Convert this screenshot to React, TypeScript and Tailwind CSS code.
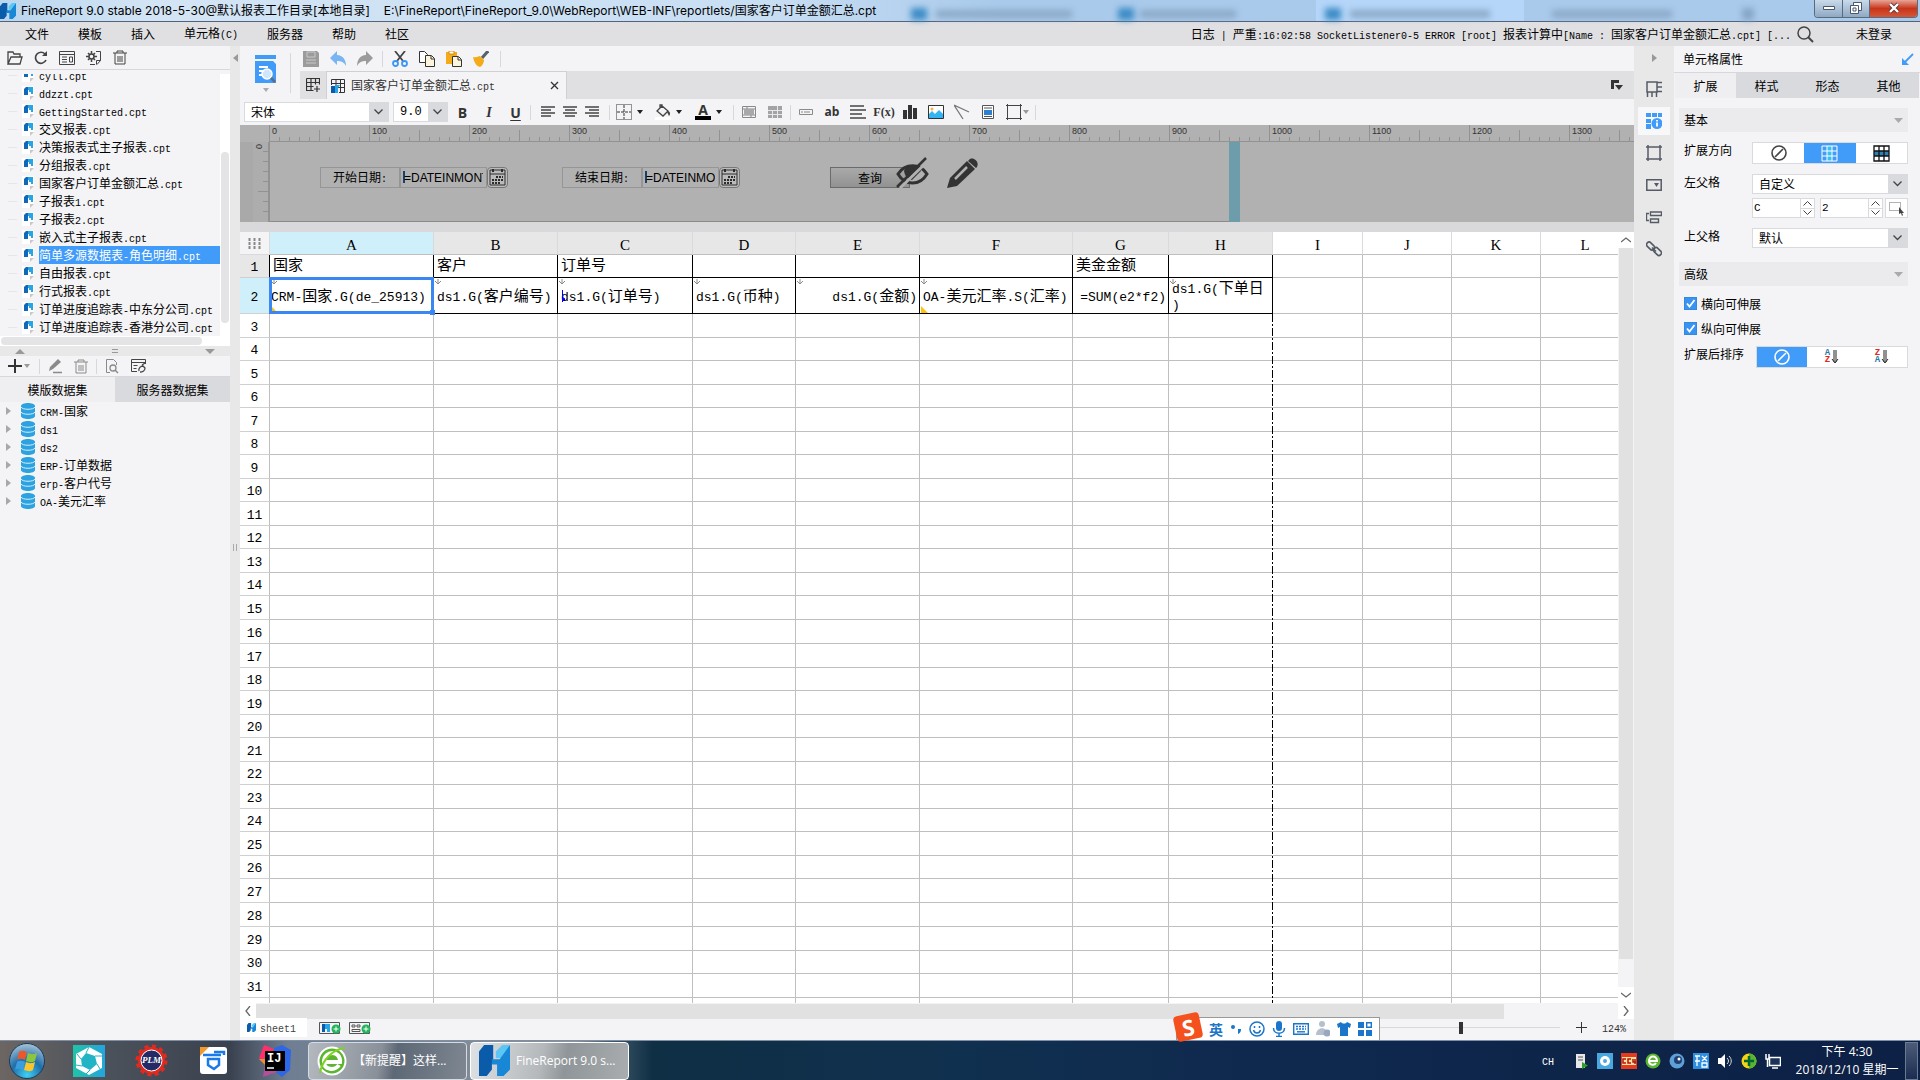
import { useState } from "react";
import type { ReactNode } from "react";
import clsx from "clsx";

const FILES = [
  "cyll.cpt",
  "ddzzt.cpt",
  "GettingStarted.cpt",
  "交叉报表.cpt",
  "决策报表式主子报表.cpt",
  "分组报表.cpt",
  "国家客户订单金额汇总.cpt",
  "子报表1.cpt",
  "子报表2.cpt",
  "嵌入式主子报表.cpt",
  "简单多源数据表-角色明细.cpt",
  "自由报表.cpt",
  "行式报表.cpt",
  "订单进度追踪表-中东分公司.cpt",
  "订单进度追踪表-香港分公司.cpt",
];

const DATASETS = ["CRM-国家", "ds1", "ds2", "ERP-订单数据", "erp-客户代号", "OA-美元汇率"];

const COLUMNS = [
  { name: "A", w: "w-[164px]" },
  { name: "B", w: "w-[124px]" },
  { name: "C", w: "w-[135px]" },
  { name: "D", w: "w-[103px]" },
  { name: "E", w: "w-[124px]" },
  { name: "F", w: "w-[153px]" },
  { name: "G", w: "w-[96px]" },
  { name: "H", w: "w-[104px]" },
  { name: "I", w: "w-[90px]" },
  { name: "J", w: "w-[89px]" },
  { name: "K", w: "w-[89px]" },
  { name: "L", w: "w-[89px]" },
];

const HEAD_CELLS = ["国家", "客户", "订单号", "", "", "", "美金金额", ""];
const DATA_CELLS = [
  "CRM-国家.G(de_25913)",
  "ds1.G(客户编号)",
  "ds1.G(订单号)",
  "ds1.G(币种)",
  "ds1.G(金额)",
  "OA-美元汇率.S(汇率)",
  "=SUM(e2*f2)",
  "ds1.G(下单日\n)",
];
const ROWS = Array.from({ length: 30 }, (_, i) => i + 3);

// 西文用等宽字体，宽度约为汉字的一半
function Txt({ children, big }: { children: string; big?: boolean }) {
  return (
    <span className={clsx("whitespace-pre", big ? "text-[15px]" : "text-[12px]")}>
      {children.split(/([\x20-\x7e]+)/).map((part, i) =>
        i % 2 ? (
          <span key={i} className={clsx("font-['Liberation_Mono',monospace]", big ? "text-[13px]" : "text-[10px]")}>{part}</span>
        ) : (
          part
        )
      )}
    </span>
  );
}

function Svg({ w = 16, h = 16, children, className }: { w?: number; h?: number; children: ReactNode; className?: string }) {
  return (
    <svg width={w} height={h} viewBox={`0 0 ${w} ${h}`} fill="none" className={clsx("shrink-0", className)} aria-hidden="true">
      {children}
    </svg>
  );
}

const Logo = ({ s = 14 }: { s?: number }) => (
  <svg width={s} height={s} viewBox="0 0 24 24" className="shrink-0" aria-hidden="true">
    <path d="M0 5 4 0h7v12l-1 2v5l-4 5H0z" fill="#0a5cab" />
    <path d="M13 5l5-5h6l-3 10h-8z" fill="#5cc6f5" />
    <path d="M10 11h6l8-11v19l-5 5h-5v-9h-4z" fill="#1787d6" />
  </svg>
);

const FileIcon = () => (
  <Svg w={13} h={15}>
    <path d="M0 0h12v10l-4 4H0z" fill="#fff" />
    <path d="M8 14v-4h4z" fill="#c8c8cc" />
    <path d="M2 3 4 1h2v8H2z" fill="#0f68b8" />
    <path d="M6 1h5v7H9V6H7V4H6z" fill="#27a5e4" />
  </Svg>
);

const DbIcon = () => (
  <Svg w={14} h={16}>
    <path d="M0 3c0-4 14-4 14 0v10c0 4-14 4-14 0z" fill="#2ca3e0" />
    <path d="M0 4c1 3 13 3 14 0M0 9c1 3 13 3 14 0" stroke="#d8effa" />
  </Svg>
);

const Caret = ({ color = "#222" }: { color?: string }) => (
  <Svg w={8} h={5}><path d="M1 0h6L4 4z" fill={color} /></Svg>
);

const Sep = ({ tall }: { tall?: boolean }) => <i className={clsx("w-px shrink-0 bg-[#d8d8dc]", tall ? "h-4" : "h-[15px]")} />;

const TrashIcon = ({ color = "#444" }: { color?: string }) => (
  <Svg w={14} h={15}>
    <path d="M0 3h14M4 3V1h6v2M2 3v11h10V3M5 6v6M7 6v6M9 6v6" stroke={color} />
  </Svg>
);

const NoneIcon = ({ color = "#444" }: { color?: string }) => (
  <Svg w={16} h={16}>
    <circle cx="8" cy="8" r="7" stroke={color} strokeWidth="1.6" />
    <path d="M4 12l8-8" stroke={color} strokeWidth="1.6" />
  </Svg>
);

const CalIcon = () => (
  <Svg w={17} h={17}>
    <path d="M1 1h15v15H1zM1 5h15" stroke="#2c2c2c" />
    <path d="M4 0v3M13 0v3" stroke="#2c2c2c" strokeWidth="2" />
    <path d="M7 8h7M3 11h11M3 14h8" stroke="#2c2c2c" strokeWidth="2" strokeDasharray="2 1" />
  </Svg>
);

function IconButton({ label, className, children }: { label: string; className?: string; children: ReactNode }) {
  return (
    <button type="button" aria-label={label} className={clsx("flex shrink-0 items-center justify-center", className)}>
      {children}
    </button>
  );
}

function TitleBar() {
  return (
    <header className="relative flex h-[22px] shrink-0 items-center border-b border-[#55637a] bg-[linear-gradient(90deg,#b9d6ee_0,#d3e5f5_8%,#c8def3_40%,#b9d4ef_46%,#a9caeb_52%,#a9caeb)] font-['Inter','Noto_Sans_CJK_SC',sans-serif] text-[12px]">
      <div className="absolute inset-y-0 left-[1316px] w-[208px] bg-[#b5d6f9]" />
      <div className="absolute inset-0 overflow-hidden blur-[3px]">
        <i className="absolute left-[911px] top-2 h-3 w-4 bg-[#3c8cc6]" />
        <i className="absolute left-[936px] top-2.5 h-2 w-[136px] bg-[#8ba9c8]" />
        <i className="absolute left-[1118px] top-2 h-3 w-4 bg-[#3c8cc6]" />
        <i className="absolute left-[1140px] top-2.5 h-2 w-[96px] bg-[#8ba9c8]" />
        <i className="absolute left-[1325px] top-2 h-3 w-4 bg-[#3c8cc6]" />
        <i className="absolute left-[1350px] top-2.5 h-2 w-[140px] bg-[#8ba9c8]" />
        <i className="absolute left-[1552px] top-2.5 h-2 w-[120px] bg-[#8ba9c8]" />
        <i className="absolute left-[1742px] top-2 h-3 w-3 bg-[#86a5c6]" />
      </div>
      <div className="relative flex w-full items-center whitespace-pre">
        <Logo s={16} />
        <span className="pl-[5px]">FineReport 9.0 stable 2018-5-30@默认报表工作目录[本地目录]</span>
        <span className="pl-[14px]">E:\FineReport\FineReport_9.0\WebReport\WEB-INF\reportlets/国家客户订单金额汇总.cpt</span>
        <div className="mb-1 ml-auto mr-[2px] flex h-[18px] overflow-hidden rounded-b border border-t-0 border-[#5a6b80]">
          <IconButton label="最小化" className="w-7 border-r border-[#5a6b80] bg-[linear-gradient(#c9daea,#8fa9c3)]">
            <Svg w={14} h={8}><path d="M1.500 2.500h11v3h-11z" fill="#fff" stroke="#49566b" /></Svg>
          </IconButton>
          <IconButton label="还原" className="w-[27px] border-r border-[#5a6b80] bg-[linear-gradient(#c9daea,#8fa9c3)]">
            <Svg w={14} h={14}>
              <path d="M4.500 1.500h8v8h-8z" fill="#fff" stroke="#49566b" />
              <path d="M1.500 4.500h8v8h-8zM4 7h3v3H4z" fill="#fff" stroke="#49566b" />
            </Svg>
          </IconButton>
          <IconButton label="关闭" className="w-[47px] bg-[linear-gradient(#e8a596,#c8351b_50%,#d4573a)]">
            <Svg w={14} h={12}>
              <path d="M3 2l8 8M11 2l-8 8" stroke="#5d3838" strokeWidth="4" />
              <path d="M3 2l8 8M11 2l-8 8" stroke="#fff" strokeWidth="2.400" />
            </Svg>
          </IconButton>
        </div>
      </div>
    </header>
  );
}

function MenuBar() {
  return (
    <nav className="flex h-6 shrink-0 items-center bg-[#e0e0e3] pl-[25px]">
      <div className="flex gap-[29px]">
        {["文件", "模板", "插入", "单元格(C)", "服务器", "帮助", "社区"].map((m) => (
          <button key={m} type="button" className="leading-4"><Txt>{m}</Txt></button>
        ))}
      </div>
      <div className="ml-auto flex items-center pr-[28px]">
        <Txt>{"日志 | 严重:16:02:58 SocketListener0-5 ERROR [root] 报表计算中[Name : 国家客户订单金额汇总.cpt] [..."}</Txt>
        <IconButton label="搜索" className="ml-[6px] mr-[42px]">
          <Svg w={17} h={17}>
            <circle cx="7" cy="7" r="6" stroke="#444" strokeWidth="1.500" />
            <path d="M11 11l5 5" stroke="#444" strokeWidth="2" />
          </Svg>
        </IconButton>
        <button type="button"><Txt>未登录</Txt></button>
      </div>
    </nav>
  );
}

function LeftPanel() {
  const [selected, setSelected] = useState("简单多源数据表-角色明细.cpt");
  const [tab, setTab] = useState(0);
  return (
    <aside className="flex w-[230px] shrink-0 flex-col bg-[#f4f4f6]">
      <div className="flex h-[24px] shrink-0 items-center gap-[11px] border-b border-[#d8d8dc] pl-[7px]">
        <IconButton label="打开">
          <Svg w={16} h={14}>
            <path d="M1 13V1h5l1 2h6v3M1 13l3-7h11l-2 7z" stroke="#444" strokeWidth="1.300" />
          </Svg>
        </IconButton>
        <IconButton label="刷新">
          <Svg w={14} h={14}>
            <path d="M12 9a5.500 5.500 0 1 1-1-6" stroke="#444" strokeWidth="1.700" />
            <path d="M13 0v5H8z" fill="#444" />
          </Svg>
        </IconButton>
        <IconButton label="定位">
          <Svg w={16} h={14}>
            <path d="M.5.5h15v13H.5zM.5 3.500h15M3 6h5M3 8.500h5M3 11h5M10.500 6h3v5h-3z" stroke="#444" />
          </Svg>
        </IconButton>
        <IconButton label="设置">
          <Svg w={16} h={14}>
            <circle cx="5.500" cy="5.500" r="2.500" stroke="#444" strokeWidth="1.500" />
            <path d="M5.500 0v3M5.500 8v3M0 5.500h3M8 5.500h3M2 2l2 2M9 2 7 4M2 9l2-2M9 9 7 7" stroke="#444" strokeWidth="1.500" />
            <path d="M10 .5h4.500v9M4 13.500h5M11 13.500l3.500-4h-4v4" stroke="#444" />
          </Svg>
        </IconButton>
        <IconButton label="删除"><TrashIcon /></IconButton>
      </div>
      <div className="mt-1 flex h-[262px] shrink-0">
        <ul className="-mt-2 flex h-[270px] w-[220px] flex-col overflow-hidden [clip-path:inset(8px_0_0_0)]">
          {FILES.map((f) => (
            <li key={f} className="flex h-[18px] shrink-0 items-center pl-2">
              <i className="h-px w-[9px] bg-[#e6e6ea]" />
              <span className="ml-[5px]"><FileIcon /></span>
              <button
                type="button"
                onClick={() => setSelected(f)}
                className={clsx("ml-1 flex h-[18px] items-center text-left", f === selected && "w-[181px] bg-[#419bf9] text-white")}
              >
                <Txt>{f}</Txt>
              </button>
            </li>
          ))}
        </ul>
        <div className="w-[10px] bg-white pt-[78px]">
          <div className="ml-px h-[171px] w-2 rounded bg-[#e4e4e6]" />
        </div>
      </div>
      <div className="h-[10px] shrink-0 bg-white pl-px pt-px"><div className="h-2 w-[201px] rounded bg-[#e4e4e6]" /></div>
      <div className="flex h-[10px] shrink-0 items-center justify-between bg-[#e8e8e8] px-[15px]">
        <Svg w={10} h={5}><path d="M0 5h10L5 0z" fill="#999" /></Svg>
        <Svg w={6} h={5}><path d="M0 .5h6M0 3.500h6" stroke="#999" /></Svg>
        <Svg w={10} h={5}><path d="M0 0h10L5 5z" fill="#999" /></Svg>
      </div>
      <div className="flex h-[21px] shrink-0 items-center border-b border-[#d8d8dc] pl-2">
        <IconButton label="新建数据集" className="w-[31px] justify-start gap-px">
          <Svg w={14} h={14}><path d="M0 7h14M7 0v14" stroke="#333" strokeWidth="2" /></Svg>
          <Caret color="#999" />
        </IconButton>
        <Sep />
        <IconButton label="编辑" className="ml-2">
          <Svg w={15} h={15}>
            <path d="M1 12l1-4 8-8 3 3-8 7z" fill="#8a8a8a" />
            <path d="M5 13.500h9" stroke="#8a8a8a" strokeWidth="1.500" />
          </Svg>
        </IconButton>
        <IconButton label="删除数据集" className="ml-[11px]"><TrashIcon color="#8a8a8a" /></IconButton>
        <i className="ml-2 h-[15px] w-px bg-[#d8d8dc]" />
        <IconButton label="预览数据集" className="ml-2">
          <Svg w={14} h={15}>
            <path d="M5 13.500H1.500V.5h7l3 3V6" stroke="#8a8a8a" />
            <circle cx="8" cy="9" r="3" stroke="#8a8a8a" strokeWidth="1.300" />
            <path d="M10 11l3 3" stroke="#8a8a8a" strokeWidth="1.500" />
          </Svg>
        </IconButton>
        <IconButton label="连接" className="ml-3">
          <Svg w={15} h={14}>
            <path d="M6 12.500H.5V.5h14V5M.5 3.500h14M2.500 6.500h4M2.500 9.500h3" stroke="#444" />
            <path d="M8 12c-1-3 2-5 4-5l2 2c0 3-3 4-5 4M11 6l3-2" stroke="#444" strokeWidth="1.300" />
          </Svg>
        </IconButton>
      </div>
      <div className="flex h-[25px] shrink-0">
        {["模版数据集", "服务器数据集"].map((t, i) => (
          <button key={t} type="button" onClick={() => setTab(i)} className={clsx("flex-1", i === tab ? "bg-[#efeff1]" : "bg-[#d9dadd]")}>
            <Txt>{t}</Txt>
          </button>
        ))}
      </div>
      <ul className="flex-1">
        {DATASETS.map((d) => (
          <li key={d} className="flex h-[18px] items-center pl-[6px]">
            <Svg w={5} h={8}><path d="M0 0v8l5-4z" fill="#a8a8a8" /></Svg>
            <span className="ml-[10px]"><DbIcon /></span>
            <span className="ml-[5px] flex"><Txt>{d}</Txt></span>
          </li>
        ))}
      </ul>
    </aside>
  );
}

function TopTools() {
  return (
    <div className="flex h-[53px] shrink-0 bg-[#f4f4f6]">
      <div className="flex w-[60px] pl-[15px] pt-[7px]">
        <IconButton label="预览" className="h-[42px] flex-col gap-[5px]">
          <Svg w={21} h={28}>
            <path d="M0 0h21v4H0zM0 6h18l3 3v19H0z" fill="#419bf9" />
            <path d="M4 12h9M4 16h4M4 20h4" stroke="#fff" strokeWidth="2" />
            <circle cx="12" cy="19" r="5" fill="#cfe6fd" stroke="#fff" strokeWidth="1.500" />
            <path d="M16 23l4 4" stroke="#5b6d80" strokeWidth="2.500" />
          </Svg>
          <Caret color="#aaa" />
        </IconButton>
        <i className="ml-[14px] h-[40px] w-px bg-[#d8d8dc]" />
      </div>
      <div className="flex min-w-0 flex-1 flex-col">
        <div className="flex h-[25px] shrink-0 items-center gap-[11px] pl-[3px]">
          <IconButton label="保存">
            <Svg><path d="M0 0h14l2 2v14H0z" fill="#9b9b9b" /><path d="M4 1h8v5H4zM3 9h10M3 12h10" stroke="#c9c9cb" /></Svg>
          </IconButton>
          <IconButton label="撤销">
            <Svg><path d="M7 0v4c6 0 9 5 9 11-2-4-5-5-9-5v4L0 7z" fill="#79b5f2" /></Svg>
          </IconButton>
          <IconButton label="重做">
            <Svg><path d="M9 0v4C3 4 0 9 0 15c2-4 5-5 9-5v4l7-7z" fill="#9b9b9b" /></Svg>
          </IconButton>
          <span className="-mx-[2px] flex"><Sep tall /></span>
          <IconButton label="剪切">
            <Svg>
              <path d="M3 0l8 10M13 0L5 10" stroke="#444" strokeWidth="1.800" />
              <circle cx="3.500" cy="12.500" r="2.500" stroke="#3b96f5" strokeWidth="1.800" />
              <circle cx="12.500" cy="12.500" r="2.500" stroke="#3b96f5" strokeWidth="1.800" />
            </Svg>
          </IconButton>
          <IconButton label="复制">
            <Svg>
              <path d="M.5.5h5l3 3v8h-8z" fill="#fff" stroke="#333" />
              <path d="M6.500 4.500h6l3 3v8h-9z" fill="#fdf4dc" stroke="#333" />
              <path d="M12 5v3h3" stroke="#333" />
            </Svg>
          </IconButton>
          <IconButton label="粘贴">
            <Svg>
              <path d="M0 1h11v12H0z" fill="#f3ab1a" />
              <path d="M3 0h5v3H3z" fill="#fff" stroke="#d48e10" />
              <path d="M6.500 5.500h6l3 3v7h-9z" fill="#fdf4dc" stroke="#333" />
              <path d="M12 6v3h3" stroke="#333" />
            </Svg>
          </IconButton>
          <IconButton label="格式刷">
            <Svg>
              <path d="M15 0l-6 7" stroke="#56606e" strokeWidth="3" />
              <path d="M0 6c4 1 5-1 7-1l4 4c0 3-2 6-4 7-4-1-6-5-7-10z" fill="#f3ab1a" />
            </Svg>
          </IconButton>
          <Sep tall />
        </div>
        <div className="flex h-[28px] items-stretch bg-[#e0e0e3]">
          <IconButton label="新建模板" className="w-[26px]">
            <Svg w={14} h={14}>
              <path d="M.5.5h13v6M.5.5v12h7M.5 4.500h13M.5 8.500h7M5 .5v12M9.500.5v6M11 8v6M8 11h6" stroke="#333" strokeWidth="1.200" />
            </Svg>
          </IconButton>
          <div className="flex w-[241px] items-center border-x border-t border-[#d0d0d4] bg-[#f4f4f6] pl-1">
            <Svg w={14} h={14}>
              <path d="M.5 6V.5h13v13H8M.5 4.500h13M5 .5v6M9.500.5v13M7 8.500h6" stroke="#333" />
              <path d="M0 7h4v7H0z" fill="#0a5cab" />
              <path d="M4 6h5L7 9v5H4z" fill="#27a5e4" />
            </Svg>
            <span className="ml-[6px] flex text-[#333]"><Txt>国家客户订单金额汇总.cpt</Txt></span>
            <IconButton label="关闭标签" className="ml-auto mr-[7px]">
              <Svg w={9} h={9}><path d="M1 1l7 7M8 1L1 8" stroke="#333" strokeWidth="1.300" /></Svg>
            </IconButton>
          </div>
          <IconButton label="更多标签" className="ml-auto mr-[11px]">
            <Svg w={12} h={11}><path d="M0 0h8v3H3v6H0zM4 5h8l-4 5z" fill="#333" /></Svg>
          </IconButton>
        </div>
      </div>
    </div>
  );
}

function Select({ id, value, className }: { id: string; value: string; className: string }) {
  return (
    <span className={clsx("relative flex h-5 shrink-0 border border-[#d9dadd] bg-white", className)}>
      <select id={id} aria-label={value} className="w-full appearance-none bg-transparent pl-[6px] text-[12px] leading-4 outline-none">
        <option>{value}</option>
      </select>
      <span className="pointer-events-none absolute inset-y-0 right-0 flex w-[19px] items-center justify-center bg-[#d9dadd]">
        <Svg w={9} h={6}><path d="M.5.5l4 4 4-4" stroke="#444" strokeWidth="1.300" /></Svg>
      </span>
    </span>
  );
}

const Lines = ({ d, w = 14 }: { d: string; w?: number }) => (
  <Svg w={w} h={14}><path d={d} stroke="#444" strokeWidth="1.600" /></Svg>
);

function FormatBar() {
  return (
    <div className="flex h-[26px] shrink-0 items-center bg-[#f4f4f6] pl-1">
      <Select id="font" value="宋体" className="w-[145px]" />
      <Select id="size" value="9.0" className="ml-1 w-[55px] font-['Liberation_Mono',monospace]" />
      <div className="flex pl-px font-['Open_Sans',sans-serif] text-[14px] text-[#333]">
        <IconButton label="粗体" className="w-[27px]"><b>B</b></IconButton>
        <IconButton label="斜体" className="w-[26px]"><b className="font-['Liberation_Serif',serif] italic">I</b></IconButton>
        <IconButton label="下划线" className="w-[27px]"><b className="underline underline-offset-2">U</b></IconButton>
      </div>
      <span className="mx-px flex"><Sep /></span>
      <IconButton label="左对齐" className="ml-[5px] w-[22px]"><Lines d="M0 2h14M0 5h10M0 8h14M0 11h10" /></IconButton>
      <IconButton label="居中" className="w-[22px]"><Lines d="M0 2h14M2 5h10M0 8h14M2 11h10" /></IconButton>
      <IconButton label="右对齐" className="w-[22px]"><Lines d="M0 2h14M4 5h10M0 8h14M4 11h10" /></IconButton>
      <span className="mx-[6px] flex"><Sep /></span>
      <IconButton label="边框" className="w-[39px] justify-start gap-1">
        <Svg><path d="M.5.5h15v15H.5z" stroke="#333" strokeDasharray="1 1" /><path d="M8 1v14M1 8h14" stroke="#333" strokeDasharray="3 1" /></Svg>
        <Caret />
      </IconButton>
      <IconButton label="背景色" className="w-[40px] justify-start gap-1">
        <Svg>
          <path d="M2 7l5-5 6 5-5 5zM5 5V1h2v3" stroke="#444" strokeWidth="1.300" />
          <path d="M13 7c3 1 2 4 1 5l-2-4z" fill="#444" />
          <path d="M0 13h16v3H0z" fill="#fff" />
        </Svg>
        <Caret />
      </IconButton>
      <IconButton label="字体颜色" className="w-[36px] justify-start gap-1">
        <span className="flex w-4 flex-col items-center border-b-4 border-black font-['Open_Sans',sans-serif] text-[14px] leading-3 font-bold text-[#333]">A</span>
        <Caret />
      </IconButton>
      <span className="mx-[2px] flex"><Sep /></span>
      <IconButton label="合并" className="w-[26px]">
        <Svg w={14} h={14}><path d="M.5 1.500h13v11H.5zM.5 4h13M.5 10h13M5 1v3M9 10v3" stroke="#8a8a8a" /><path d="M2 4h10v6H2z" fill="#a8a8aa" /></Svg>
      </IconButton>
      <IconButton label="取消合并" className="w-[26px]">
        <Svg w={14} h={14}><path d="M0 1h14v12H0z" fill="#a3a3a5" /><path d="M0 5.500h14M0 9.500h14M4.500 5v8M9.500 1v12" stroke="#e8e8ea" /></Svg>
      </IconButton>
      <span className="mx-[2px] flex"><Sep /></span>
      <IconButton label="控件" className="w-[26px]">
        <Svg w={14} h={6}><path d="M.5.5h13v5H.5zM3 2v2M5 3h6" stroke="#8a8a8a" /></Svg>
      </IconButton>
      <IconButton label="文本" className="w-[26px] font-['Open_Sans',sans-serif] text-[12px] font-bold text-[#333]">ab</IconButton>
      <IconButton label="富文本" className="w-[26px]"><Lines w={16} d="M0 1h14M0 5h16M0 9h12M0 13h16" /></IconButton>
      <IconButton label="公式" className="w-[26px] font-['Liberation_Serif',serif] text-[12px] font-bold text-[#333]">F(x)</IconButton>
      <IconButton label="图表" className="w-[26px]">
        <Svg w={14} h={14}><path d="M0 5h4v9H0zM5 0h4v14H5zM10 3h4v11h-4z" fill="#333" /></Svg>
      </IconButton>
      <IconButton label="图片" className="w-[26px]">
        <Svg w={16} h={14}>
          <path d="M.5.5h15v13H.5z" fill="#fff" stroke="#333" />
          <path d="M1 13V9l3-3 3 3 4-4 4 4v4z" fill="#30b4f2" />
          <circle cx="4" cy="4" r="1.500" fill="#f7b23b" />
        </Svg>
      </IconButton>
      <IconButton label="斜线" className="w-[26px]">
        <Svg w={16} h={16}><path d="M0 1l15 7M0 1l9 14" stroke="#777" strokeWidth="1.300" /></Svg>
      </IconButton>
      <IconButton label="子报表" className="w-[26px]">
        <Svg w={12} h={14}>
          <path d="M.5.5h11v13H.5z" fill="#fff" stroke="#555" />
          <path d="M2 3h8M2 11.500h8" stroke="#555" />
          <path d="M2 5h8v5H2z" fill="#2d7fd0" />
        </Svg>
      </IconButton>
      <IconButton label="悬浮元素" className="w-[34px]">
        <Svg><path d="M1.500 0v16M14.500 0v16M0 1.500h16M0 14.500h16" stroke="#444" /></Svg>
        <Caret color="#999" />
      </IconButton>
      <Sep />
    </div>
  );
}

const LabelBox = ({ children, id }: { children: string; id: string }) => (
  <label htmlFor={id} className="flex h-[21px] w-[80px] items-center justify-center border border-[#969696]"><Txt>{children}</Txt></label>
);

const DateInput = ({ id, className }: { id: string; className: string }) => (
  <input
    id={id}
    readOnly
    value="=DATEINMONTH"
    className={clsx("h-[21px] border border-[#969696] bg-[#b1b1b1] bg-[linear-gradient(#1d4066,#1d4066)] bg-[length:2px_12px] bg-[position:2px_3px] bg-no-repeat px-[3px] font-['Liberation_Sans',sans-serif] text-[12px] outline-none", className)}
  />
);

function ParamPane() {
  return (
    <section className="shrink-0 bg-[#b1b1b1]">
      <div className="flex h-[17px] overflow-hidden pl-[29px]">
        {Array.from({ length: 14 }, (_, i) => (
          <div key={i} className="relative h-[17px] w-[100px] shrink-0 border-b border-[#929292]">
            <Svg w={100} h={17} className="absolute inset-0">
              <path d="M.5 0v17M50.500 5v12" stroke="#929292" />
              <path d="M10.500 12v5M20.500 12v5M30.500 12v5M40.500 12v5M60.500 12v5M70.500 12v5M80.500 12v5M90.500 12v5" stroke="#929292" />
            </Svg>
            <span className="relative block pl-[3px] font-['Liberation_Sans',sans-serif] text-[9px] leading-[13px] text-[#333]">{i * 100}</span>
          </div>
        ))}
      </div>
      <div className="flex h-[80px]">
        <div className="w-[13px] bg-[#a9a9a9]" />
        <div className="relative w-[17px] border-r-2 border-[#929292] bg-[#adadad]">
          <span className="block w-[10px] rotate-90 text-center font-['Liberation_Sans',sans-serif] text-[9px] leading-[9px] text-[#333]">0</span>
          <Svg w={15} h={80} className="absolute inset-0">
            <path d="M10 9.500h5M10 19.500h5M10 29.500h5M10 39.500h5M5 49.500h10M10 59.500h5M10 69.500h5" stroke="#929292" />
          </Svg>
        </div>
        <div className="relative flex w-[959px] items-start border-b border-[#8b8b8b] pl-[50px] pt-[25px]">
          <LabelBox id="start">开始日期:</LabelBox>
          <DateInput id="start" className="w-[87px]" />
          <IconButton label="选择开始日期" className="h-[21px] w-[21px] rounded border border-[#777] bg-[#bbb]"><CalIcon /></IconButton>
          <div className="w-[54px]" />
          <LabelBox id="end">结束日期:</LabelBox>
          <DateInput id="end" className="w-[77px]" />
          <IconButton label="选择结束日期" className="h-[21px] w-[21px] rounded border border-[#777] bg-[#bbb]"><CalIcon /></IconButton>
          <div className="w-[90px]" />
          <button type="button" className="flex h-[21px] w-[80px] items-center justify-center border border-[#6b6b6b] bg-[linear-gradient(#a9a9a9,#929292)]"><Txt>查询</Txt></button>
          <div className="absolute left-[626px] top-[15px] flex gap-[18px]">
            <Svg w={33} h={31}>
              <path d="M2 17c7-11 22-11 29 0-7 12-22 12-29 0z" stroke="#333" strokeWidth="3" />
              <path d="M8 14c2-7 15-7 17 0l-9 9c-5-1-7-4-8-9z" fill="#333" />
              <path d="M4 31 33 3" stroke="#b1b1b1" strokeWidth="3" />
              <path d="M1 30 30 1" stroke="#333" strokeWidth="2.500" />
            </Svg>
            <Svg w={31} h={31}>
              <path d="M0 31l3-10L20 4l8 8-18 17z" fill="#333" />
              <path d="M8 22 20 10" stroke="#b1b1b1" strokeWidth="2.500" />
              <path d="M22 3c3-4 11 1 8 7l-1 1-8-7z" fill="#333" />
            </Svg>
          </div>
        </div>
        <div className="w-[11px] bg-[#6d9dab]" />
      </div>
    </section>
  );
}

const ScrollArrow = ({ d, label }: { d: string; label: string }) => (
  <IconButton label={label} className="h-4 w-4 bg-white"><Svg w={10} h={10}><path d={d} stroke="#666" strokeWidth="1.300" /></Svg></IconButton>
);

const Mark = ({ className }: { className: string }) => (
  <Svg w={6} h={6} className={clsx("absolute", className)}><path d="M3 0v5M0 2l3 3 3-3" stroke="#8a8a8a" /></Svg>
);

function Sheet() {
  return (
    <section className="flex min-h-0 flex-1 bg-white">
      <div className="relative min-w-0 flex-1 overflow-hidden">
        <table className="w-[1390px] min-w-full table-fixed border-separate border-spacing-0 leading-[13px]">
          <colgroup>
            <col className="w-[30px]" />
            {COLUMNS.map((c) => <col key={c.name} className={c.w} />)}
          </colgroup>
          <thead>
            <tr className="h-[23px] font-['Liberation_Serif',serif] text-[15px]">
              <th className="border-b border-r border-[#d9dadd] bg-[#f4f4f6] p-0">
                <Svg w={13} h={11} className="mx-auto">
                  <path d="M1.500 0v11M6.500 0v11M11.500 0v11" stroke="#888" strokeWidth="2" strokeDasharray="3 1" />
                </Svg>
              </th>
              {COLUMNS.map((c, i) => (
                <th key={c.name} className={clsx("border-b border-r border-b-[#bfbfbf] border-r-[#d9dadd] p-0 pt-1 font-normal", i === 0 ? "bg-[#cff0fb]" : i < 8 ? "bg-[#e7e7e7]" : "bg-white")}>
                  {c.name}
                </th>
              ))}
            </tr>
          </thead>
          <tbody>
            <tr className="h-[23px]">
              <th className="border-b border-r border-b-[#d0d0d0] border-r-black bg-[#e7e7e7] p-0 font-normal"><Txt big>1</Txt></th>
              {COLUMNS.map((c, i) => (
                <td key={c.name} className={clsx("border-b border-r p-0 pb-1 pl-[3px]", i < 8 ? "border-black" : "border-[#bfbfbf]")}>
                  <Txt big>{HEAD_CELLS[i] ?? ""}</Txt>
                </td>
              ))}
            </tr>
            <tr className="h-[36px]">
              <th className="border-b border-r border-b-[#d0d0d0] border-r-black bg-[#cff0fb] p-0 font-normal"><Txt big>2</Txt></th>
              {COLUMNS.map((c, i) => (
                <td
                  key={c.name}
                  className={clsx(
                    "relative whitespace-nowrap border-b border-r p-0",
                    i < 8 ? "border-black" : "border-[#bfbfbf]",
                    i === 4 || i === 6 ? "pr-[2px] text-right" : i === 0 ? "pl-px" : "pl-[3px]"
                  )}
                >
                  <Txt big>{DATA_CELLS[i] ?? ""}</Txt>
                  {i < 8 && i !== 6 && <Mark className="left-px top-px" />}
                  {(i === 0 || i === 5) && <Svg w={7} h={7} className="absolute bottom-0 left-px"><path d="M0 0v7h7z" fill="#fbc40e" /></Svg>}
                  {i === 2 && <Svg w={4} h={12} className="absolute left-1 top-3"><path d="M.5 0v11M0 7l3 2-3 3z" fill="#00f" stroke="#00f" /></Svg>}
                  {i === 0 && (
                    <span className="absolute -inset-px z-10 border-3 border-[#3a86f2]">
                      <i className="absolute -bottom-1 -right-1 h-[5px] w-[5px] bg-[#3a86f2]" />
                    </span>
                  )}
                </td>
              ))}
            </tr>
            {ROWS.map((n) => (
              <tr key={n} className={n % 2 || n === 16 || n === 28 ? "h-[24px]" : "h-[23px]"}>
                <th className="border-b border-r border-b-[#d0d0d0] border-r-[#bfbfbf] p-0 font-normal"><Txt big>{n < 32 ? String(n) : ""}</Txt></th>
                {COLUMNS.map((c, i) => (
                  <td key={c.name} className={clsx("border-b border-[#bfbfbf] p-0", i !== 7 && "border-r")} />
                ))}
              </tr>
            ))}
          </tbody>
        </table>
        {/* 分页线 */}
        <i className="absolute bottom-0 left-[1032px] top-[82px] w-px bg-[repeating-linear-gradient(#000_0_8px,transparent_8px_10px,#000_10px_12px,transparent_12px_14px)]" />
      </div>
      <div className="flex w-4 shrink-0 flex-col bg-[#f4f4f6]">
        <ScrollArrow label="向上滚动" d="M0 7l5-4 5 4" />
        <div className="mx-px min-h-0 flex-1 bg-[#e1e1e1]" />
        <div className="h-7" />
        <ScrollArrow label="向下滚动" d="M0 3l5 4 5-4" />
      </div>
    </section>
  );
}

const AddBadge = () => (
  <>
    <circle cx="17" cy="8" r="4.500" fill="#22b45a" />
    <path d="M14.500 8h5M17 5.500v5" stroke="#fff" />
  </>
);

function SheetBar() {
  return (
    <div className="relative shrink-0 bg-[#f4f4f6]">
      <div className="flex h-4 items-center">
        <ScrollArrow label="向左滚动" d="M7 0L3 5l4 5" />
        <div className="h-[15px] flex-1 bg-[#e1e1e1]" />
        <div className="w-[114px]" />
        <ScrollArrow label="向右滚动" d="M3 0l4 5-4 5" />
      </div>
      <div className="flex h-[21px] items-center pb-1">
        <button type="button" className="flex h-[19px] w-[67px] items-center gap-1 bg-white pl-[7px] text-[#444]"><Logo s={9} /><Txt>sheet1</Txt></button>
        <IconButton label="新建表格" className="ml-3">
          <Svg w={22} h={13}><path d="M.5 1.500h20v11H.5z" stroke="#555" /><path d="M3 3h3v8H3z" fill="#0a5cab" /><path d="M6 3h5v8H8V8H6z" fill="#27a5e4" /><AddBadge /></Svg>
        </IconButton>
        <IconButton label="新建聚合块" className="ml-2">
          <Svg w={22} h={13}><path d="M.5 1.500h20v11H.5zM3 4h3v2H3zM8 4h3v2H8zM3 8.500h8v2H3z" stroke="#555" /><AddBadge /></Svg>
        </IconButton>
        <input
          type="range"
          aria-label="缩放"
          defaultValue={51}
          className="ml-auto mr-4 h-3 w-[202px] appearance-none bg-[linear-gradient(#d8d8da,#d8d8da)] bg-[length:100%_1px] bg-center bg-no-repeat [&::-webkit-slider-thumb]:h-3 [&::-webkit-slider-thumb]:w-1 [&::-webkit-slider-thumb]:appearance-none [&::-webkit-slider-thumb]:bg-[#333]"
        />
        <IconButton label="放大" className="mr-[15px]"><Svg w={11} h={11}><path d="M0 5.500h11M5.500 0v11" stroke="#333" /></Svg></IconButton>
        <span className="mr-[6px] flex w-[26px] text-[#333]"><Txt>124%</Txt></span>
      </div>
      {/* 输入法工具条 */}
      <div className="absolute bottom-0 left-[936px] flex h-[23px] w-[204px] items-center gap-[7px] border border-b-0 border-[#999] bg-white pl-8 text-[#1b76c9]">
        <span className="absolute -left-[2px] -top-1 flex h-[26px] w-[26px] -rotate-12 items-center justify-center rounded bg-[#f4511e] font-['Open_Sans',sans-serif] text-[22px] leading-none font-bold text-white">S</span>
        <span className="text-[14px] font-bold leading-4">英</span>
        <Svg w={12} h={14}><circle cx="3" cy="5" r="2" fill="#1b76c9" /><path d="M8 7h3c0 3-1 4-3 5z" fill="#1b76c9" /></Svg>
        <Svg w={16} h={16}><circle cx="8" cy="8" r="7" stroke="#1b76c9" strokeWidth="1.500" /><path d="M5.500 5v2M10.500 5v2M4.500 9c1 4 6 4 7 0" stroke="#1b76c9" strokeWidth="1.500" /></Svg>
        <Svg w={14} h={16}><rect x="4" y="0" width="6" height="10" rx="3" fill="#1b76c9" /><path d="M1.500 7c0 7 11 7 11 0M7 12v4M4 15.500h6" stroke="#1b76c9" strokeWidth="1.500" /></Svg>
        <Svg w={16} h={12}><path d="M.7.7h14.600v10.600H.7z" stroke="#1b76c9" strokeWidth="1.400" /><path d="M3 3.500h10M3 6h10" stroke="#1b76c9" strokeWidth="1.600" strokeDasharray="2 1" /><path d="M4 8.800h8" stroke="#1b76c9" strokeWidth="1.400" /></Svg>
        <Svg w={14} h={16}><circle cx="6" cy="3" r="3" fill="#b5bfcd" /><path d="M0 14c0-9 12-9 12 0z" fill="#b5bfcd" /><circle cx="11" cy="12" r="3.500" fill="#98a8bd" /></Svg>
        <Svg w={14} h={14}><path d="M4 0c1 2 5 2 6 0l4 2-1 4-2-1v9H3V5L1 6 0 2z" fill="#1b76c9" /></Svg>
        <Svg w={14} h={14}><path d="M0 0h6v6H0zM0 8h6v6H0zM8 8h6v6H8z" fill="#1b76c9" /><path d="M8.700.7h4.600v4.600H8.700z" stroke="#1b76c9" strokeWidth="1.400" /></Svg>
      </div>
    </div>
  );
}

const STRIP_ICONS = [
  { label: "单元格元素", body: <path d="M1 1h10v10H1zM11 1.500h5M11 6h5M11 10.500h5M1.500 11v5M6 11v5M10.500 11v5" stroke="#555b66" strokeWidth="1.500" /> },
  {
    label: "单元格属性",
    body: (
      <>
        <path d="M0 0h5v4H0zM6 0h5v4H6zM12 0h4v4h-4zM0 6h5v4H0zM0 11h5v5H0z" fill="#419bf9" />
        <circle cx="11" cy="10.500" r="5.500" fill="#419bf9" />
        <path d="M11 7v1.500M11 9.500v4" stroke="#fff" strokeWidth="1.800" />
      </>
    ),
  },
  { label: "悬浮元素", body: <path d="M2 0v16M14 0v16M0 2h16M0 14h16" stroke="#555b66" strokeWidth="1.500" /> },
  {
    label: "控件设置",
    body: (
      <>
        <path d="M.8 2.800h14.400v10.400H.8z" stroke="#555b66" strokeWidth="1.500" />
        <path d="M8 6h5l-2.500 4z" fill="#555b66" />
      </>
    ),
  },
  { label: "条件属性", body: <path d="M4.500 3h11v3.500h-11zM4.500 10h8v3.500h-8zM3 4.500H.5v7H3" stroke="#555b66" strokeWidth="1.400" /> },
  {
    label: "超级链接",
    body: (
      <g stroke="#555b66" strokeWidth="1.600">
        <rect x="-1" y="2.500" width="9" height="5" rx="2.500" transform="rotate(45 4.500 5) translate(1 0)" />
        <rect x="7" y="8" width="9" height="5" rx="2.500" transform="rotate(45 11.500 10.500)" />
        <path d="M6 6.500l4 4" />
      </g>
    ),
  },
];

function Strip() {
  return (
    <div className="flex w-[40px] shrink-0 flex-col items-center bg-[#e8e8e8] pt-2">
      <Svg w={5} h={8}><path d="M0 0v8l5-4z" fill="#999" /></Svg>
      <div className="mt-[13px] flex flex-col gap-1">
        {STRIP_ICONS.map((s, i) => (
          <IconButton key={s.label} label={s.label} className={clsx("h-7 w-8", i === 1 && "bg-[#f8f8fa]")}>
            <Svg>{s.body}</Svg>
          </IconButton>
        ))}
      </div>
    </div>
  );
}

const SectionHead = ({ children }: { children: string }) => (
  <h3 className="flex h-6 items-center justify-between bg-[#ebebed] pl-[5px] pr-[5px]">
    <Txt>{children}</Txt>
    <Svg w={9} h={5}><path d="M0 0h9L4.500 5z" fill="#aaa" /></Svg>
  </h3>
);

const SortIcon = ({ a, b, top }: { a: string; b: string; top: string }) => (
  <span className="flex items-center gap-px font-['Liberation_Mono',monospace] text-[9px] font-bold leading-[7px]">
    <span className={clsx("flex flex-col", top === "A" ? "text-[#2d7aa8]" : "text-[#e8251b]")}>
      {a}
      <span className={top === "A" ? "text-[#e8251b]" : "text-[#2d7aa8]"}>{b}</span>
    </span>
    <Svg w={8} h={14}><path d="M3 0v12M5 0v12M1 9l3 4 3-4" stroke="#222" /></Svg>
  </span>
);

function Spinner({ id, value }: { id: string; value: string }) {
  return (
    <span className="flex h-5 w-[63px] border border-[#d9dadd] bg-white">
      <input id={id} aria-label={id} defaultValue={value} className="w-[48px] border-r border-[#d9dadd] pl-px font-['Liberation_Mono',monospace] text-[11px] outline-none" />
      <span className="flex w-[13px] flex-col">
        <IconButton label="增加" className="flex-1 border-b border-[#d9dadd]"><Svg w={9} h={5}><path d="M.5 4.500l4-4 4 4" stroke="#444" /></Svg></IconButton>
        <IconButton label="减少" className="flex-1"><Svg w={9} h={5}><path d="M.5.5l4 4 4-4" stroke="#444" /></Svg></IconButton>
      </span>
    </span>
  );
}

function Check({ id, children }: { id: string; children: string }) {
  const [on, setOn] = useState(true);
  return (
    <div className="flex h-[25px] items-center pl-[5px]">
      <span className="relative flex">
        <input id={id} type="checkbox" checked={on} onChange={(e) => setOn(e.target.checked)} className="h-[13px] w-[13px] appearance-none border border-[#3388e0] bg-white checked:bg-[#3893f3]" />
        {on && <Svg w={13} h={13} className="pointer-events-none absolute inset-0"><path d="M3 6.500l2.500 3 5-6.500" stroke="#fff" strokeWidth="1.800" /></Svg>}
      </span>
      <label htmlFor={id} className="ml-1 flex"><Txt>{children}</Txt></label>
    </div>
  );
}

function PropsPanel() {
  const [tab, setTab] = useState(0);
  return (
    <aside className="flex w-[246px] shrink-0 flex-col bg-[#f4f4f6]">
      <h2 className="flex h-[27px] items-center justify-between border-b border-[#d8d8dc] pl-[9px] pr-[6px]">
        <Txt>单元格属性</Txt>
        <Svg w={12} h={12}><path d="M11 1L3 9" stroke="#419bf9" strokeWidth="1.800" /><path d="M0 5v7h7z" fill="#419bf9" /></Svg>
      </h2>
      <div className="flex h-[25px] pl-px pr-px">
        {["扩展", "样式", "形态", "其他"].map((t, i) => (
          <button key={t} type="button" onClick={() => setTab(i)} className={clsx("flex-1", i === tab ? "bg-[#efeff1]" : "bg-[#d9dadd]")}>
            <Txt>{t}</Txt>
          </button>
        ))}
      </div>
      <div className="flex flex-col pl-[5px] pr-3 pt-[10px]">
        <SectionHead>基本</SectionHead>
        <div className="mt-[10px] flex h-[22px] pl-[5px]">
          <span className="w-[68px] leading-4"><Txt>扩展方向</Txt></span>
          <div className="flex flex-1 border border-[#d9dadd] bg-white">
            <IconButton label="不扩展" className="flex-1"><NoneIcon /></IconButton>
            <IconButton label="纵向扩展" className="flex-1 bg-[#419bf9]">
              <Svg w={17} h={17}><path d="M6 1h5v15H6z" fill="#35c2f2" /><path d="M1 1h15v15H1zM1 6h15M1 11h15M6 1v15M11 1v15" stroke="#fff" /></Svg>
            </IconButton>
            <IconButton label="横向扩展" className="flex-1">
              <Svg w={17} h={17}><path d="M1 6h15v5H1z" fill="#2f80b4" /><path d="M1 1h15v15H1zM1 6h15M1 11h15M6 1v15M11 1v15" stroke="#111" strokeWidth="1.300" /></Svg>
            </IconButton>
          </div>
        </div>
        <div className="mt-[10px] flex pl-[5px]">
          <label htmlFor="left-parent" className="w-[68px] leading-4"><Txt>左父格</Txt></label>
          <Select id="left-parent" value="自定义" className="flex-1" />
        </div>
        <div className="mt-1 flex pl-[73px]">
          <Spinner id="父格列" value="C" />
          <span className="w-[5px]" />
          <Spinner id="父格行" value="2" />
          <IconButton label="选择单元格" className="ml-[2px] h-5 flex-1 border border-[#d9dadd] bg-white">
            <Svg w={16} h={15}><path d="M.5 1.500h11v8H.5z" stroke="#666" strokeDasharray="1 1" /><path d="M10 6v7l2-1 1 3 1-1-1-2h2z" fill="#444" /></Svg>
          </IconButton>
        </div>
        <div className="mt-[10px] flex pl-[5px]">
          <label htmlFor="top-parent" className="w-[68px] leading-4"><Txt>上父格</Txt></label>
          <Select id="top-parent" value="默认" className="flex-1" />
        </div>
        <div className="mt-[14px]"><SectionHead>高级</SectionHead></div>
        <div className="mt-[5px]">
          <Check id="stretch-x">横向可伸展</Check>
          <Check id="stretch-y">纵向可伸展</Check>
        </div>
        <div className="mt-[5px] flex h-[22px] pl-[5px]">
          <span className="w-[72px] leading-4"><Txt>扩展后排序</Txt></span>
          <div className="flex flex-1 border border-[#d9dadd] bg-white">
            <IconButton label="不排序" className="flex-1 bg-[#419bf9]"><NoneIcon color="#fff" /></IconButton>
            <IconButton label="升序" className="flex-1"><SortIcon a="A" b="Z" top="A" /></IconButton>
            <IconButton label="降序" className="flex-1"><SortIcon a="Z" b="A" top="Z" /></IconButton>
          </div>
        </div>
      </div>
    </aside>
  );
}

function Taskbar() {
  return (
    <footer className="flex h-[40px] shrink-0 items-center border-t border-[#7e8fa6] bg-[linear-gradient(90deg,#6c6663_0,#4d535c_5%,#3a424f_12%,#6f7e92_15%,#7c8794_22%,#8b939b_30%,#3d5566_32%,#0f2f45_34%,#10304f_50%,#0f294e_65%,#0d2045)] font-['Open_Sans','Noto_Sans_CJK_SC',sans-serif] text-white">
      <IconButton label="开始" className="ml-2">
        <Svg w={38} h={38}>
          <defs>
            <radialGradient id="orb" cx=".5" cy=".9" r=".9">
              <stop offset="0" stopColor="#3fd0f5" />
              <stop offset=".5" stopColor="#1f6ea8" />
              <stop offset="1" stopColor="#a8c4d8" />
            </radialGradient>
          </defs>
          <circle cx="19" cy="19" r="17.500" fill="url(#orb)" stroke="#1c3a58" />
          <path d="M11 10c3-2 5-1 8 0l-2 8c-3-1-5-2-8 0z" fill="#e8582c" />
          <path d="M20 11c3 1 5 2 9 0l-2 8c-3 2-6 1-9 0z" fill="#8cc63f" />
          <path d="M9 20c3-2 5-1 8 0l-2 8c-3-1-5-2-8 0z" fill="#3b9de0" />
          <path d="M18 20c3 1 5 2 9 0l-2 8c-3 2-6 1-9 0z" fill="#fbc52d" />
        </Svg>
      </IconButton>
      <IconButton label="应用" className="ml-[27px]">
        <Svg w={32} h={32}>
          <defs><linearGradient id="teal"><stop stopColor="#20c3a8" /><stop offset="1" stopColor="#23a5de" /></linearGradient></defs>
          <path d="M0 0h32v32H0z" fill="url(#teal)" />
          <path d="M16 2 29 9v14l-13 7-13-7V9z" fill="#fff" />
          <path d="M13 8l9 3 2 8-7 6-8-4-1-7z" fill="#22b4c4" />
          <path d="M16 2l-3 6M29 11l-7 0M27 24l-3-5M13 29l4-4M3 20l6 1M4 9l4 5" stroke="#22b4c4" />
        </Svg>
      </IconButton>
      <IconButton label="PLM" className="relative ml-[30px]">
        <Svg w={33} h={33}>
          <circle cx="16.500" cy="16.500" r="14" stroke="#e02a20" strokeWidth="4" strokeDasharray="4 3.330" />
          <circle cx="16.500" cy="16.500" r="12" fill="#232a66" stroke="#e02a20" strokeWidth="3" />
          <circle cx="16.500" cy="16.500" r="10.500" stroke="#fff" />
        </Svg>
        <span className="absolute font-['Liberation_Serif',serif] text-[9px] font-bold italic">PLM</span>
      </IconButton>
      <IconButton label="工具" className="ml-[32px]">
        <Svg w={27} h={27}>
          <rect width="27" height="27" rx="3" fill="#fff" />
          <path d="M0 9V0h9z" fill="#f39a2c" />
          <path d="M3 8h18M14 5h10v3M8 12v6l6 4 5-4v-6z" stroke="#1a7be8" strokeWidth="2.500" />
        </Svg>
      </IconButton>
      <IconButton label="IDEA" className="relative ml-[32px]">
        <Svg w={32} h={32}>
          <path d="M5 0l10 4-8 12-7-3z" fill="#fe2f6c" />
          <path d="M15 3l8-3 9 5-1 20-8 7-8-6z" fill="#2e66e8" />
          <path d="M0 14l6 5-2 13 14-5-8-15z" fill="#b2509c" />
          <path d="M0 14h6v6z" fill="#f58a2b" />
          <path d="M6 6h20v20H6z" fill="#000" />
          <path d="M8 23h7" stroke="#fff" strokeWidth="1.500" />
        </Svg>
        <span className="absolute left-2 top-2 font-['Liberation_Mono',monospace] text-[12px] leading-3 font-bold">IJ</span>
      </IconButton>
      <button type="button" className="ml-[17px] flex h-[38px] w-[159px] items-center gap-[6px] rounded-sm border border-[#d5dbe2] bg-[linear-gradient(100deg,#b4b9c0,#8a9099_45%,#5d6876_55%,#7e8791)] pl-2 text-[12px]">
        <Svg w={30} h={30}>
          <circle cx="15" cy="15" r="13.500" fill="#5cb531" stroke="#fff" strokeWidth="2" />
          <path d="M7 16h16c1-12-16-12-16 0 0 8 11 9 15 3" stroke="#fff" strokeWidth="4" />
          <path d="M3 27C5 14 16 3 28 2" stroke="#7ed321" strokeWidth="2" />
        </Svg>
        【新提醒】这样...
      </button>
      <button type="button" className="ml-[3px] flex h-[38px] w-[159px] items-center gap-[6px] rounded-sm border border-white bg-[linear-gradient(100deg,#dfe2e4,#b4b8bb_45%,#8f9598_60%,#a9adb0)] pl-2 text-[12px]">
        <Logo s={31} />
        FineReport 9.0 s...
      </button>
      <div className="ml-auto flex h-full items-center">
        <span className="mr-[19px] flex"><Txt>CH</Txt></span>
        <div className="flex items-center gap-[8px]">
          <Svg><path d="M3 1h9v14H3z" fill="#e8e8e8" /><path d="M5 4h5M5 7h5" stroke="#555" /><path d="M9 9l6 3.500L9 16z" fill="#2ba02b" /></Svg>
          <Svg><path d="M0 0h16v16H0z" fill="#4aa8e0" /><circle cx="8" cy="8" r="5" fill="#fff" /><circle cx="8" cy="8" r="2" fill="#4aa8e0" /></Svg>
          <Svg><path d="M0 0h16v16H0z" fill="#e8381e" /><path d="M1 4h14v8H1z" fill="#fbe0a0" /><path d="M5 6H2v4h3M10 6H7v4h3M12 6v3h3M14 6v5" stroke="#b4150a" strokeWidth="1.500" /></Svg>
          <Svg><circle cx="8" cy="8" r="7.500" fill="#5cb531" /><path d="M4 8h8c0-6-8-6-8 0 0 4 5 5 7 2" stroke="#fff" strokeWidth="2" /></Svg>
          <Svg><circle cx="8" cy="8" r="7.500" fill="#5f9fd8" /><circle cx="9" cy="7" r="4" fill="#1f3f70" /><circle cx="10" cy="6" r="1.500" fill="#fff" /></Svg>
          <Svg><path d="M0 0h16v16H0z" fill="#2d8fe0" /><path d="M2 3h5M2 8h5M4 3v10M9 3l5 5M14 3L9 8M9 10h5v4H9z" stroke="#fff" strokeWidth="1.300" /></Svg>
          <Svg><path d="M1 5h3l4-4v14l-4-4H1z" fill="#fff" /><path d="M10 5c2 2 2 4 0 6M12 3c3 3 3 7 0 10" stroke="#ddd" /></Svg>
          <Svg><circle cx="8" cy="8" r="7.500" fill="#f5d313" /><path d="M8 0.500a7.500 7.500 0 0 1 0 15z" fill="#58b531" /><path d="M8 3v10M3 8h10" stroke="#063" strokeWidth="2.500" /></Svg>
          <Svg><path d="M4.500 4.500h11v8h-11z" fill="#1b3358" stroke="#fff" strokeWidth="1.500" /><path d="M7 15h6M1 1v5h3V1M2.500 6v8" stroke="#fff" strokeWidth="1.500" /></Svg>
        </div>
        <div className="ml-3 w-[108px] text-center text-[12px] leading-[18px]">
          <div>下午 4:30</div>
          <div className="whitespace-nowrap">2018/12/10 星期一</div>
        </div>
        <IconButton label="显示桌面" className="ml-1 mr-[2px] h-[38px] w-[13px] border border-[#6a7a92] bg-[linear-gradient(#4c5c78,#1a2c50)]">{null}</IconButton>
      </div>
    </footer>
  );
}

export default function App() {
  return (
    <div className="flex h-screen flex-col overflow-hidden bg-[#f4f4f6] font-['Noto_Sans_CJK_SC',sans-serif] text-[12px] text-black">
      <TitleBar />
      <MenuBar />
      <div className="flex min-h-0 flex-1">
        <LeftPanel />
        <div className="flex w-[10px] shrink-0 flex-col items-center bg-[#e8e8e8] pt-2">
          <Svg w={5} h={8}><path d="M5 0v8L0 4z" fill="#999" /></Svg>
          <Svg w={4} h={7} className="mt-[482px]"><path d="M.5 0v7M3.500 0v7" stroke="#aaa" /></Svg>
        </div>
        <main className="flex min-w-0 flex-1 flex-col">
          <TopTools />
          <FormatBar />
          <ParamPane />
          <div className="h-[10px] shrink-0 bg-[#d9d9dc]" />
          <Sheet />
          <SheetBar />
        </main>
        <Strip />
        <PropsPanel />
      </div>
      <Taskbar />
    </div>
  );
}
